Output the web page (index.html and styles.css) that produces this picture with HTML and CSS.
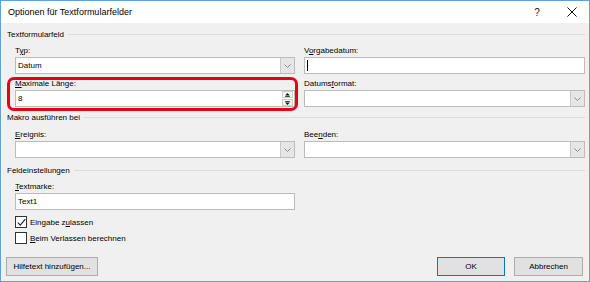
FILE: index.html
```html
<!DOCTYPE html>
<html lang="de">
<head>
<meta charset="utf-8">
<title>Optionen für Textformularfelder</title>
<link rel="stylesheet" href="styles.css">
</head>
<body>
<div class="window">
  <div class="titlebar">
    <span class="title">Optionen für Textformularfelder</span>
    <span class="tb-btn help">?</span>
    <span class="tb-btn close">
      <svg width="10" height="10" viewBox="0 0 10 10"><path d="M0.5 0.5 L9.5 9.5 M9.5 0.5 L0.5 9.5" stroke="#111" stroke-width="1" fill="none"/></svg>
    </span>
  </div>
  <div class="content">
    <div class="group-head"><span>Textformularfeld</span></div>
    <div class="grid grid-first">
      <div class="field">
        <span class="field-label">T<u>y</u>p:</span>
        <div class="combo"><span class="value">Datum</span><span class="arrow"><svg width="7" height="4" viewBox="0 0 7 4"><path d="M0.5 0.5 L3.5 3.5 L6.5 0.5" stroke="#8a8a8a" fill="none" stroke-width="1"/></svg></span></div>
      </div>
      <div class="field">
        <span class="field-label">V<u>o</u>rgabedatum:</span>
        <div class="textbox"><span class="caret"></span></div>
      </div>
      <div class="field highlighted">
        <span class="field-label"><u>M</u>aximale Länge:</span>
        <div class="textbox"><span class="value">8</span>
          <span class="spin">
            <span class="spin-btn"><svg width="9" height="5" viewBox="0 0 9 5"><path d="M1.5 3 L4.5 0 L7.5 3 Z" fill="#111"/><rect x="1.5" y="4" width="6" height="1" fill="#111"/></svg></span>
            <span class="spin-btn"><svg width="9" height="5" viewBox="0 0 9 5"><rect x="1.5" y="0" width="6" height="1" fill="#111"/><path d="M1.5 2 L4.5 5 L7.5 2 Z" fill="#111"/></svg></span>
          </span>
        </div>
      </div>
      <div class="field">
        <span class="field-label">Datums<u>f</u>ormat:</span>
        <div class="combo"><span class="value"></span><span class="arrow"><svg width="7" height="4" viewBox="0 0 7 4"><path d="M0.5 0.5 L3.5 3.5 L6.5 0.5" stroke="#8a8a8a" fill="none" stroke-width="1"/></svg></span></div>
      </div>
    </div>

    <div class="group-head head-second"><span>Makro ausführen bei</span></div>
    <div class="grid grid-second">
      <div class="field">
        <span class="field-label"><u>E</u>reignis:</span>
        <div class="combo"><span class="value"></span><span class="arrow"><svg width="7" height="4" viewBox="0 0 7 4"><path d="M0.5 0.5 L3.5 3.5 L6.5 0.5" stroke="#8a8a8a" fill="none" stroke-width="1"/></svg></span></div>
      </div>
      <div class="field">
        <span class="field-label">Bee<u>n</u>den:</span>
        <div class="combo"><span class="value"></span><span class="arrow"><svg width="7" height="4" viewBox="0 0 7 4"><path d="M0.5 0.5 L3.5 3.5 L6.5 0.5" stroke="#8a8a8a" fill="none" stroke-width="1"/></svg></span></div>
      </div>
    </div>

    <div class="group-head head-third"><span>Feldeinstellungen</span></div>
    <div class="field single">
      <span class="field-label"><u>T</u>extmarke:</span>
      <div class="textbox"><span class="value">Text1</span></div>
    </div>

    <div class="check check-first">
      <span class="box"><svg width="9" height="9" viewBox="0 0 9 9"><path d="M0.8 4.6 L3.3 7.2 L8.3 1.2" stroke="#222" stroke-width="1.1" fill="none"/></svg></span>
      <span>Eingabe z<u>u</u>lassen</span>
    </div>
    <div class="check check-second">
      <span class="box"></span>
      <span><u>B</u>eim Verlassen berechnen</span>
    </div>

    <div class="buttons">
      <span class="btn btn-help">Hilfetext hinzufügen...</span>
      <span class="spacer"></span>
      <span class="btn btn-ok">OK</span>
      <span class="btn btn-cancel">Abbrechen</span>
    </div>
  </div>
</div>
</body>
</html>
```

FILE: styles.css
```css
* { box-sizing: border-box; }
html, body { margin: 0; padding: 0; }
body {
  width: 590px;
  height: 282px;
  overflow: hidden;
  font-family: "Liberation Sans", Arial, sans-serif;
  font-size: 8px;
  color: #000;
  background: #fff;
}
u { text-decoration: underline; text-underline-offset: 1px; }

.window {
  width: 590px;
  height: 282px;
  border: 1px solid #5aa2e0;
  display: flex;
  flex-direction: column;
}

.titlebar {
  flex: none;
  height: 22px;
  background: #fff;
  display: flex;
  align-items: center;
}
.title {
  flex: 1;
  font-size: 9px;
  padding-left: 7px;
  color: #000;
}
.tb-btn {
  width: 36px;
  height: 22px;
  display: flex;
  align-items: center;
  justify-content: center;
}
.help { font-size: 10px; color: #222; }
.close { width: 34px; }

.content {
  flex: 1;
  background: #f0f0f0;
  padding: 4px 4px 5px 6px;
  display: flex;
  flex-direction: column;
}

.group-head {
  height: 14px;
  display: flex;
  align-items: center;
  gap: 4px;
  color: #000;
}
.group-head::after {
  content: "";
  flex: 1;
  height: 1px;
  background: #dcdcdc;
}
.head-second { margin-top: 3px; }
.head-third { margin-top: 5px; }

.grid {
  display: grid;
  grid-template-columns: 280px 281px;
  column-gap: 9px;
  row-gap: 3px;
  margin-left: 8px;
}
.grid-first { margin-top: 3px; }
.grid-second { margin-top: 4px; }

.field { display: flex; flex-direction: column; }
.field.single { width: 280px; margin-left: 8px; margin-top: 3px; }
.field-label {
  display: block;
  height: 13px;
  line-height: 13px;
}

.textbox, .combo {
  height: 17px;
  background: #fff;
  border: 1px solid #bcbcbc;
  display: flex;
  align-items: center;
}
.value { flex: 1; padding-left: 2px; }
.combo .arrow {
  width: 14px;
  height: 15px;
  background: #e6e6e6;
  border-left: 1px solid #c9c9c9;
  display: flex;
  align-items: center;
  justify-content: center;
}
.caret {
  width: 1px;
  height: 11px;
  background: #000;
  margin-left: 2px;
}

.spin {
  width: 11px;
  display: flex;
  flex-direction: column;
  gap: 1px;
  margin-right: 1px;
}
.spin-btn {
  height: 7px;
  background: #f4f4f4;
  border: 1px solid #cfcfcf;
  display: flex;
  align-items: center;
  justify-content: center;
}
.spin-btn svg { display: block; width: 7px; height: 4px; }

.highlighted { position: relative; }
.highlighted::after {
  content: "";
  position: absolute;
  top: 0px;
  left: -8px;
  right: -3px;
  bottom: -4px;
  border: 3px solid #e8001a;
  border-radius: 7px;
  pointer-events: none;
}

.check {
  display: flex;
  align-items: center;
  height: 14px;
  margin-left: 8px;
  gap: 2px;
}
.check-first { margin-top: 5px; }
.check-second { margin-top: 2px; }
.box {
  width: 12px;
  height: 12px;
  background: #fff;
  border: 1px solid #333;
  display: flex;
  align-items: center;
  justify-content: center;
  margin-right: 1px;
}

.buttons {
  margin-top: auto;
  display: flex;
  align-items: center;
  gap: 9px;
  padding-right: 2px;
}
.spacer { flex: 1; }
.btn {
  height: 19px;
  background: #e1e1e1;
  border: 1px solid #adadad;
  display: flex;
  align-items: center;
  justify-content: center;
}
.btn-help { width: 92px; margin-left: -1px; }
.btn-ok { width: 68px; border-color: #0078d7; }
.btn-cancel { width: 69px; }
```
